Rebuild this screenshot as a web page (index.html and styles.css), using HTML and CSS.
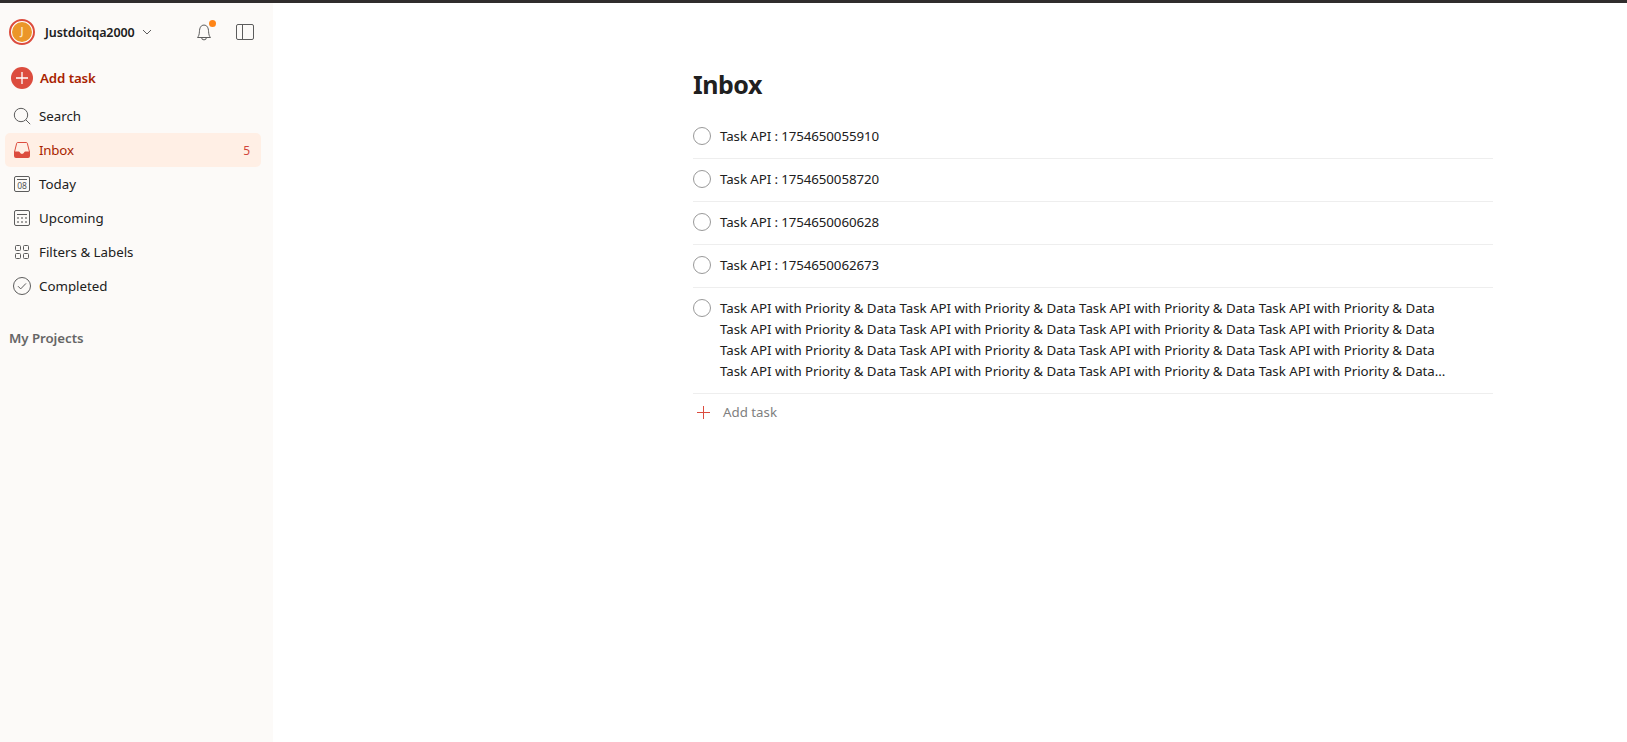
FILE: index.html
```html
<!DOCTYPE html>
<html lang="en">
<head>
<meta charset="utf-8">
<title>Inbox</title>
<link rel="stylesheet" href="styles.css">
</head>
<body>
<div class="app">
  <aside class="sidebar">
    <header class="account">
      <span class="avatar"><span class="avatar-face">J</span></span>
      <span class="account-name">Justdoitqa2000</span>
      <svg class="chevron" width="10" height="6" viewBox="0 0 10 6"><path d="M1 1l4 4 4-4"/></svg>
      <span class="bell">
        <svg width="24" height="24" viewBox="0 0 24 24"><path d="M5.500 17.500h13c-1.200-1.500-1.700-2.600-1.900-5.700-.2-4.300-1.600-6.700-4.600-6.700s-4.400 2.400-4.600 6.700c-.2 3.100-.7 4.200-1.900 5.700zM9.600 17.500a2.400 2.400 0 0 0 4.800 0"/></svg>
        <span class="dot"></span>
      </span>
      <svg class="panel" width="20" height="18" viewBox="0 0 20 18"><rect x="1.500" y="1.500" width="17" height="15" rx="1.500"/><path d="M7.500 1.500v15"/></svg>
    </header>
    <div class="add">
      <svg width="22" height="22" viewBox="0 0 22 22"><circle cx="11" cy="11" r="11"/><path d="M11 5v12M5 11h12"/></svg>
      <span>Add task</span>
    </div>
    <nav class="nav">
      <div class="item">
        <svg viewBox="0 0 24 24"><circle cx="11" cy="11" r="6.700"/><path d="M15.800 15.800l4.400 4.400"/></svg>
        <span class="label">Search</span>
      </div>
      <div class="item active">
        <svg viewBox="0 0 24 24"><path d="M4.500 14L6.700 5.200Q6.900 4.500 7.600 4.500h8.800q.7 0 .9.700L19.500 14"/><path class="fill" d="M4 13.500h4.800q.6 0 .8.600a2.500 2.500 0 0 0 4.800 0q.2-.6.800-.6H20V18a2 2 0 0 1-2 2H6a2 2 0 0 1-2-2z"/></svg>
        <span class="label tight">Inbox</span><span class="count">5</span>
      </div>
      <div class="item">
        <svg viewBox="0 0 24 24"><rect x="4.500" y="4.500" width="15" height="15" rx="1.500"/><path d="M7 7.500h10"/><text x="12" y="16.800" text-anchor="middle">08</text></svg>
        <span class="label">Today</span>
      </div>
      <div class="item">
        <svg viewBox="0 0 24 24"><rect x="4.500" y="4.500" width="15" height="15" rx="1.500"/><path d="M7 8.500h10"/><path class="dots" d="M7.250 12h1.500M11.250 12h1.500M15.250 12h1.500M7.250 16h1.500M11.250 16h1.500M15.250 16h1.500"/></svg>
        <span class="label">Upcoming</span>
      </div>
      <div class="item">
        <svg viewBox="0 0 24 24"><rect x="5.500" y="5.500" width="5" height="5" rx="1"/><rect x="13.500" y="5.500" width="5" height="5" rx="1"/><rect x="5.500" y="13.500" width="5" height="5" rx="1"/><rect x="13.500" y="13.500" width="5" height="5" rx="1"/></svg>
        <span class="label">Filters &amp; Labels</span>
      </div>
      <div class="item">
        <svg viewBox="0 0 24 24"><circle cx="12" cy="12" r="8.500"/><path d="M8 12.200l2.700 2.700L16 9.400"/></svg>
        <span class="label">Completed</span>
      </div>
    </nav>
    <h2 class="projects">My Projects</h2>
  </aside>
  <main class="main">
    <section class="content">
      <h1 class="title">Inbox</h1>
      <ul class="tasks">
        <li class="task"><span class="check"></span><span class="name">Task API : 1754650055910</span></li>
        <li class="task"><span class="check"></span><span class="name">Task API : 1754650058720</span></li>
        <li class="task"><span class="check"></span><span class="name">Task API : 1754650060628</span></li>
        <li class="task"><span class="check"></span><span class="name">Task API : 1754650062673</span></li>
        <li class="task"><span class="check"></span><span class="name long">Task API with Priority &amp; Data Task API with Priority &amp; Data Task API with Priority &amp; Data Task API with Priority &amp; Data<br>Task API with Priority &amp; Data Task API with Priority &amp; Data Task API with Priority &amp; Data Task API with Priority &amp; Data<br>Task API with Priority &amp; Data Task API with Priority &amp; Data Task API with Priority &amp; Data Task API with Priority &amp; Data<br>Task API with Priority &amp; Data Task API with Priority &amp; Data Task API with Priority &amp; Data Task API with Priority &amp; Data...</span></li>
      </ul>
      <div class="add-inline">
        <svg width="13" height="13" viewBox="0 0 13 13"><path d="M6.500 0v13M0 6.500h13"/></svg>
        <span>Add task</span>
      </div>
    </section>
  </main>
</div>
</body>
</html>
```
FILE: styles.css
```css
* { box-sizing: border-box; }
body {
  margin: 0;
  background: #fff;
  color: #202020;
  font: 13.3px/21px "Noto Sans", "Open Sans", sans-serif;
}
.app { display: flex; height: 742px; border-top: 3px solid #302d2d; }
svg { display: block; flex: none; fill: none; stroke: #5c5c5c; stroke-width: 1; }
.sidebar { width: 273px; background: #fcfaf8; white-space: nowrap; }

.account { display: flex; align-items: center; height: 58px; padding: 0 18px 0 9px; }
.avatar {
  display: flex; align-items: center; justify-content: center;
  width: 26px; height: 26px; margin-right: 10px;
  border: 2px solid #dc4c3e; border-radius: 50%; background: #fff;
}
.avatar-face {
  width: 20px; height: 20px; border-radius: 50%;
  background: #eb9629; color: #fbe6c8;
  font-size: 10px; line-height: 19px; text-align: center; font-weight: 600;
}
.account-name { width: 91px; font-size: 12.5px; font-weight: 600; letter-spacing: -0.1px; }
.chevron { margin-left: 6px; }
.bell { position: relative; margin-left: 40px; }
.dot {
  position: absolute; top: 0; right: 0;
  width: 7px; height: 7px; border-radius: 50%; background: #ff8517;
}
.panel { margin-left: auto; }

.add { display: flex; align-items: center; gap: 7px; height: 34px; padding-left: 11px; color: #a81f00; font-weight: 600; letter-spacing: -0.1px; }
.add circle { fill: #dc4c3e; stroke: none; }
.add path { stroke: #fff; stroke-width: 1.3; }

.nav { padding: 4px 12px 0 5px; }
.item { display: flex; align-items: center; height: 34px; padding: 0 11px 0 5px; border-radius: 5px; }
.item svg { width: 24px; height: 24px; margin-right: 5px; }
.item text { font: 8.500px "Noto Sans", sans-serif; fill: #555; stroke: none; }
.item .dots { stroke-width: 1.500; }
.tight { letter-spacing: -0.2px; }
.active { background: #ffefe5; color: #a81f00; }
.active svg { stroke: #dc4c3e; }
.active .fill { fill: #dc4c3e; stroke: none; }
.count { margin-left: auto; color: #d1453b; font-size: 12px; }
.projects { margin: 24px 0 0 9px; font-size: 13.3px; font-weight: 600; color: #666; line-height: 22px; letter-spacing: -0.06px; }

.main { flex: 1; padding: 64px 0 0 420px; }
.content { width: 800px; }
.title { margin: 0; font-size: 25px; line-height: 34px; font-weight: 700; letter-spacing: -0.5px; }
.tasks { margin: 15px 0 0; padding: 0; list-style: none; }
.task { display: flex; align-items: flex-start; padding: 10px 0 11px; border-bottom: 1px solid #eee; }
.check { flex: none; width: 18px; height: 18px; margin: 1px 9px 0 0; border: 1px solid #999; border-radius: 50%; }
.name { white-space: nowrap; letter-spacing: -0.09px; }
.long { letter-spacing: -0.036px; }
.add-inline { display: flex; align-items: center; height: 36px; padding-left: 4px; gap: 13px; color: #808080; }
.add-inline svg { stroke: #dc4c3e; }
```
